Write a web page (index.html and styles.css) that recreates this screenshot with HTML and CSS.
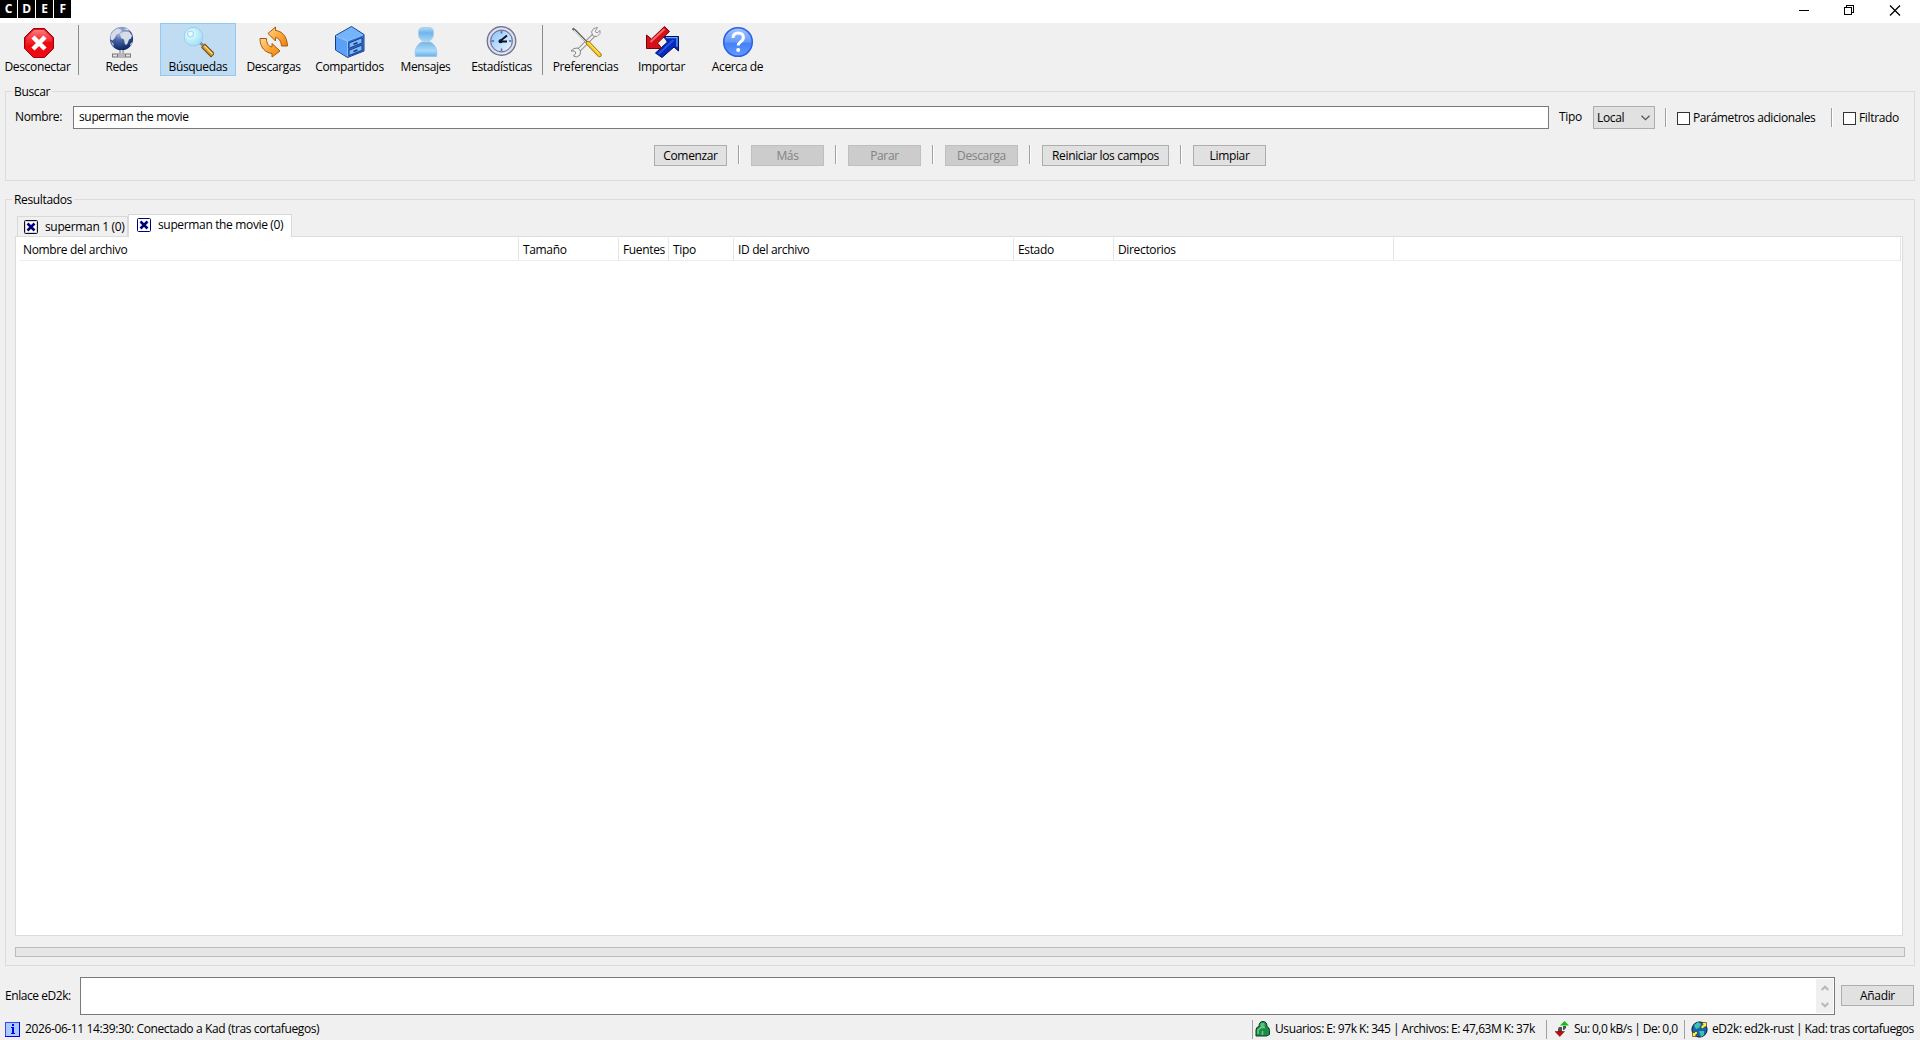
FILE: index.html
```html
<!DOCTYPE html>
<html lang="es">
<head>
    <meta charset="UTF-8">
    <title>Búsquedas</title>
    <link rel="stylesheet" href="styles.css">
</head>
<body>
    <div class="titlebar">
        <div class="keys">
            <span>C</span><span>D</span><span>E</span><span>F</span>
        </div>
        <svg class="window-buttons" width="102" height="11" viewBox="0 0 102 11" fill="none" stroke="#000" shape-rendering="crispEdges">
            <path d="M0 5.5h10"/>
            <path d="M45.500 2.500h7v7h-7zM47.500 2.500v-2h7v7h-2"/>
            <path d="M91 .5l10 10M101 .5l-10 10" stroke-width="1.300" shape-rendering="auto"/>
        </svg>
    </div>

    <div class="toolbar">
        <div class="tool">
            <svg width="32" height="32" viewBox="0 0 32 32">
                <defs>
                    <linearGradient id="red" x1="0" y1="0" x2="0" y2="1">
                        <stop offset="0" stop-color="#ff9a9a"/><stop offset=".6" stop-color="#f4343c"/><stop offset="1" stop-color="#e81018"/>
                    </linearGradient>
                </defs>
                <path d="M11.500 2.500h11l9 9v11l-9 9h-11l-9-9v-11z" fill="#ee0a12" stroke="#9c0008"/>
                <path d="M12 4h10l8 8v3.500q-13 0-26 5v-8.500z" fill="url(#red)" opacity=".8"/>
                <path d="M11 11l12 12M23 11l-12 12" stroke="#fff" stroke-width="4.500"/>
            </svg>
            <span>Desconectar</span>
        </div>
        <div class="tool-sep"></div>
        <div class="tool">
            <svg width="32" height="32" viewBox="0 0 32 32">
                <defs>
                    <radialGradient id="globe" cx=".4" cy=".2" r=".8">
                        <stop offset="0" stop-color="#c4d0ea"/><stop offset=".45" stop-color="#4a68a8"/><stop offset="1" stop-color="#0c2464"/>
                    </radialGradient>
                </defs>
                <circle cx="15.500" cy="12.700" r="11.600" fill="url(#globe)"/>
                <path d="M4.500 9l3-4 4-2.500 4 1.500-2 3-3 1.500-2 4-2 2-2-1zM14 8l4-2.500 5 0 3 4-1 3-2 1-2 5-2 0-1-5-3-1.500zM17 2.500l4 0 3 2-4 0z" fill="#d8dce8"/>
                <path d="M5 15l3 3-1 3zM24 18l2-2v2l-2 2z" fill="#a8b4d0"/>
                <path d="M15.500 24v4M6 29.500h19" stroke="#777" stroke-width="4"/>
                <path d="M15.500 24v4M7 29.500h4M20 29.500h4" stroke="#e4e4e4" stroke-width="2"/>
                <path d="M12 29.500h7" stroke="#b8b8b8" stroke-width="4"/>
            </svg>
            <span>Redes</span>
        </div>
        <div class="tool active">
            <svg width="32" height="32" viewBox="0 0 32 32">
                <defs>
                    <radialGradient id="lens" cx=".35" cy=".35" r=".75">
                        <stop offset="0" stop-color="#fff"/><stop offset=".4" stop-color="#c6f2fc"/><stop offset="1" stop-color="#9adcf6"/>
                    </radialGradient>
                </defs>
                <path d="M17 16l6 5" stroke="#8094a0" stroke-width="3"/>
                <circle cx="11.500" cy="10.700" r="9.300" fill="url(#lens)" stroke="#a4cbe8"/>
                <circle cx="8.500" cy="8" r="3" fill="#e8fcff" stroke="#8cd4f0"/>
                <path d="M21 19.500l10 10" stroke="#70400c" stroke-width="5.500"/>
                <path d="M21.500 20l9 9" stroke="#d89a30" stroke-width="3.500"/>
                <path d="M22.500 19.800l8 8" stroke="#ffe490" stroke-width="1.200"/>
            </svg>
            <span>Búsquedas</span>
        </div>
        <div class="tool">
            <svg width="32" height="32" viewBox="0 0 32 32">
                <defs>
                    <linearGradient id="orange" x1="0" y1="0" x2="1" y2="1">
                        <stop offset="0" stop-color="#ffd890"/><stop offset=".5" stop-color="#ffa83c"/><stop offset="1" stop-color="#f08010"/>
                    </linearGradient>
                </defs>
                <g fill="url(#orange)" stroke="#a85808">
                    <path d="M10 7.500l7.500-6.500v3.500c6 .5 11.500 5 12 15.500h-6c-.5-5-2.500-8-6-8.500v3.500z"/>
                    <path d="M22 25l-8 6v-3.500c-7-1-12-6-12-15h6.500c0 5 2 8 5.500 8.500v-3.500z"/>
                </g>
            </svg>
            <span>Descargas</span>
        </div>
        <div class="tool">
            <svg width="32" height="32" viewBox="0 0 32 32">
                <path d="M1.500 9.500l16-9 12.500 8v16.500l-16.500 6.500-12-7.500z" fill="#3c82e0" stroke="#123c8c"/>
                <path d="M2 9.700l15.500-8.700 12 7.700-16 6.300z" fill="#74b4fa"/>
                <path d="M2 10l11.500 5v16l-11.500-7z" fill="#5ca0f6"/>
                <path d="M13.500 15l16-6.300v16l-16 6.300z" fill="#2c6cd0"/>
                <path d="M15 17l13-5.300v5.300l-13 5.300zM15 24.300l13-5.300v5.300l-13 5.200z" fill="#84b8f4" stroke="#14408c"/>
                <path d="M19.500 18.300l4-1.600M19.500 25.500l4-1.600" stroke="#123c8c" stroke-width="1.600"/>
                <path d="M2 10l11.500 5v15.500M13.500 15l15.500-6" fill="none" stroke="#a8d4ff" stroke-width=".8"/>
            </svg>
            <span>Compartidos</span>
        </div>
        <div class="tool">
            <svg width="32" height="32" viewBox="0 0 32 32">
                <defs>
                    <linearGradient id="head" x1="0" y1="0" x2="0" y2="1">
                        <stop offset="0" stop-color="#b4daf6"/><stop offset=".4" stop-color="#70b4ec"/><stop offset="1" stop-color="#a4d8f8"/>
                    </linearGradient>
                    <linearGradient id="torso" x1="0" y1="0" x2="0" y2="1">
                        <stop offset="0" stop-color="#78b4e4"/><stop offset=".6" stop-color="#a8dcfa"/><stop offset="1" stop-color="#68aee8"/>
                    </linearGradient>
                </defs>
                <path d="M5.500 30.500c-1.500-7 2-13 6.500-14.500h8c4.500 1.500 8 7.500 6.500 14.500z" fill="url(#torso)" stroke="#90c4ea" stroke-width=".8"/>
                <path d="M11.500 1.500h9q3.500 1 3 6 0 6-5 7.500h-5q-5-1.500-5-7.500-.5-5 3-6z" fill="url(#head)" stroke="#a0cce8" stroke-width=".8"/>
            </svg>
            <span>Mensajes</span>
        </div>
        <div class="tool">
            <svg width="32" height="32" viewBox="0 0 32 32">
                <defs>
                    <linearGradient id="dial" x1="0" y1="0" x2="1" y2="1">
                        <stop offset="0" stop-color="#88c0f8"/><stop offset="1" stop-color="#f0faff"/>
                    </linearGradient>
                </defs>
                <circle cx="15.500" cy="15" r="14.300" fill="#b4b8d0" stroke="#6c7090" stroke-width="1.200"/>
                <circle cx="15.500" cy="15" r="12.500" fill="none" stroke="#e4e6f2" stroke-width="1.500"/>
                <circle cx="15.500" cy="15" r="10.800" fill="url(#dial)" stroke="#686c8c"/>
                <path d="M15.500 5v2.500M15.500 22.500v2.500M5.500 15h2.500M23 15h2.500" stroke="#4068b8" stroke-width="1.500"/>
                <path d="M13.500 15.500l7.500-6M13 15.500h8" stroke="#081828" stroke-width="2"/>
                <circle cx="14.500" cy="15.300" r="2" fill="#081828"/>
            </svg>
            <span>Estadísticas</span>
        </div>
        <div class="tool-sep"></div>
        <div class="tool">
            <svg width="32" height="32" viewBox="0 0 32 32">
                <path d="M7 26l18-18" stroke="#888" stroke-width="4"/>
                <path d="M7 26l18-18" stroke="#f0f0f0" stroke-width="2.400"/>
                <path d="M27.500 1.500l-4 1-2 3.500 1.500 4 4 .5 3-3 0-3-3 2.500-2-1.500z" fill="#f4f4f4" stroke="#888" stroke-width=".9"/>
                <path d="M1 25h3.500l1.500 2-2.500 3 3 1 3.500-2 .5-4-2.500-3-4 .5z" fill="#f4f4f4" stroke="#777" stroke-width=".9"/>
                <path d="M2.500 2.500l3 2 11.500 12" fill="none" stroke="#666" stroke-width="2.200"/>
                <path d="M4 4l12 12" stroke="#d8d8d8"/>
                <path d="M18 17l11.500 12" stroke="#9c6c00" stroke-width="4.300" stroke-linecap="round"/>
                <path d="M18 17l11.500 12" stroke="#ffc81c" stroke-width="2.800" stroke-linecap="round"/>
                <path d="M19 17l10 10.500" stroke="#fff09c"/>
            </svg>
            <span>Preferencias</span>
        </div>
        <div class="tool">
            <svg width="33" height="32" viewBox="0 0 33 32">
                <path d="M9.500 27l12-11-5-5.500h16v14.500l-4.500-4-12 10.500z" fill="#0828b8" stroke="#040c60"/>
                <path d="M12.500 28l15-14" stroke="#1c58e8" stroke-width="2"/>
                <path d="M20 11.700h11v9" fill="none" stroke="#5cb0ff" stroke-width="1.300"/>
                <path d="M11.500 16.500l6-5 2.500 3-6 5z" fill="#f0f0f0"/>
                <path d="M18.500.5l5 5-12 11.500 4.500 5.500h-15.500v-13.500l5 4z" fill="#d41018" stroke="#780008"/>
                <path d="M18.500 3l-14 13" stroke="#ff6468" stroke-width="2"/>
            </svg>
            <span>Importar</span>
        </div>
        <div class="tool">
            <svg width="32" height="32" viewBox="0 0 32 32">
                <defs>
                    <linearGradient id="help" x1="0" y1="0" x2="0" y2="1">
                        <stop offset="0" stop-color="#a4c6ff"/><stop offset=".5" stop-color="#6498fa"/><stop offset=".55" stop-color="#4480f8"/><stop offset="1" stop-color="#649cff"/>
                    </linearGradient>
                </defs>
                <circle cx="16" cy="16" r="14.300" fill="url(#help)" stroke="#2860ec" stroke-width="1.500"/>
                <path d="M11 12q0-5 5.200-5t5.200 4.500q0 2.500-2.700 4.300-2.500 1.700-2.500 3.700" fill="none" stroke="#fff" stroke-width="3"/>
                <circle cx="16.200" cy="24" r="2" fill="#fff"/>
            </svg>
            <span>Acerca de</span>
        </div>
    </div>

    <fieldset class="search">
        <legend>Buscar</legend>
        <div class="search-row">
            <label class="name-label">Nombre:</label>
            <div class="name-input">superman the movie</div>
            <label class="type-label">Tipo</label>
            <div class="select">Local
                <svg width="9" height="6" viewBox="0 0 9 6" fill="none" stroke="#555" stroke-width="1.300"><path d="M.5 .7l4 4 4-4"/></svg>
            </div>
            <i class="sep"></i>
            <label class="check params"><i></i>Parámetros adicionales</label>
            <i class="sep"></i>
            <label class="check"><i></i>Filtrado</label>
        </div>
        <div class="search-buttons">
            <div class="btn">Comenzar</div>
            <i class="sep"></i>
            <div class="btn disabled">Más</div>
            <i class="sep"></i>
            <div class="btn disabled">Parar</div>
            <i class="sep"></i>
            <div class="btn disabled">Descarga</div>
            <i class="sep"></i>
            <div class="btn wide">Reiniciar los campos</div>
            <i class="sep"></i>
            <div class="btn">Limpiar</div>
        </div>
    </fieldset>

    <fieldset class="results">
        <legend>Resultados</legend>
        <div class="tabs">
            <div class="tab">
                <svg width="14" height="14" viewBox="0 0 14 14"><rect x=".5" y=".5" width="13" height="13" rx="1" fill="#fff" stroke="#000080"/><rect x="1.500" y="1.500" width="11" height="11" fill="none" stroke="#e8e060"/><path d="M3.500 3.500l7 7M10.500 3.500l-7 7" stroke="#000080" stroke-width="2.600"/></svg>
                <span>superman 1 (0)</span>
            </div>
            <div class="tab current">
                <svg width="14" height="14" viewBox="0 0 14 14"><rect x=".5" y=".5" width="13" height="13" rx="1" fill="#fff" stroke="#000080"/><path d="M3.500 3.500l7 7M10.500 3.500l-7 7" stroke="#000080" stroke-width="2.600"/></svg>
                <span>superman the movie (0)</span>
            </div>
        </div>
        <div class="list">
            <div class="list-header">
                <div>Nombre del archivo</div>
                <div>Tamaño</div>
                <div>Fuentes</div>
                <div>Tipo</div>
                <div>ID del archivo</div>
                <div>Estado</div>
                <div>Directorios</div>
                <div></div>
            </div>
        </div>
        <div class="progress"></div>
    </fieldset>

    <div class="link-row">
        <label>Enlace eD2k:</label>
        <div class="link-input">
            <div class="scroll">
                <svg width="8" height="6" viewBox="0 0 8 6" fill="none" stroke="#b8b8b8" stroke-width="2"><path d="M.7 5l3.300-3.300L7.300 5"/></svg>
                <svg width="8" height="6" viewBox="0 0 8 6" fill="none" stroke="#b8b8b8" stroke-width="2"><path d="M.7 1l3.300 3.300L7.300 1"/></svg>
            </div>
        </div>
        <div class="btn">Añadir</div>
    </div>

    <div class="statusbar">
        <div class="status log">
            <svg width="15" height="15" viewBox="0 0 15 15"><rect x=".5" y=".5" width="14" height="14" fill="#a8ccff" stroke="#4040ff"/><path d="M14.500 0v14.500H0" fill="none" stroke="#0000f0"/><path d="M7 2h2v2h-2zM6 5h3v6h1v1h-4v-1h1v-5h-1z" fill="#0000f0"/></svg>
            <span>2026-06-11 14:39:30: Conectado a Kad (tras cortafuegos)</span>
        </div>
        <i class="status-sep"></i>
        <div class="status users">
            <svg width="15" height="16" viewBox="0 0 15 16"><path d="M1 15V9q0-3 3-3.500 0-5 4-5t4 5q2.500 1 2.500 4v4l-3 1.500z" fill="#1c8c44" stroke="#083c1c"/><circle cx="7.500" cy="4" r="2.300" fill="#58c080"/><path d="M3 13V9l3-2.500h4M7.500 14v-4" fill="none" stroke="#6ccc90" stroke-width="1.500"/></svg>
            <span>Usuarios: E: 97k K: 345 | Archivos: E: 47,63M K: 37k</span>
        </div>
        <i class="status-sep"></i>
        <div class="status speed">
            <svg width="14" height="16" viewBox="0 0 14 16"><path d="M9.500 0l4.500 4.500H5z" fill="#10c010"/><path d="M8 5h3v2l-2 2h-1z" fill="#505050"/><path d="M4 6h3v5H3V8z" fill="#505050"/><path d="M0 10.500h9.500L4.800 15.500z" fill="#c80808" stroke="#600" stroke-width=".5"/></svg>
            <span>Su: 0,0 kB/s | De: 0,0</span>
        </div>
        <i class="status-sep"></i>
        <div class="status network">
            <svg width="17" height="17" viewBox="0 0 17 17"><circle cx="8.500" cy="8.500" r="7.600" fill="#1464b4" stroke="#04182c"/><path d="M3 4l4-3 3 2-2 4-3 1zM8 10l5 0 0 4-3 2z" fill="#40c0b0"/><path d="M11 1.500h4.500v5l-1.500-1-2.500 2.500-2-2 2.500-2.500zM6 15.500H1.500v-5l1.500 1.500 2-2 2 2-2.500 2z" fill="#ffec50" stroke="#302800" stroke-width=".6"/></svg>
            <span>eD2k: ed2k-rust | Kad: tras cortafuegos</span>
        </div>
    </div>
</body>
</html>
```
FILE: styles.css
```css
* {
    box-sizing: border-box;
}
html {
    height: 1040px;
    overflow: hidden;
}
body {
    margin: 0;
    height: 1040px;
    background: #f0f0f0;
    color: #000;
    font: 12px/16px "Open Sans", "Noto Sans", sans-serif;
    letter-spacing: -0.35px;
    white-space: nowrap;
    overflow: hidden;
    display: flex;
    flex-direction: column;
}
body > * {
    flex: none;
}
svg {
    display: block;
    flex: none;
}
i {
    display: block;
}
.titlebar {
    height: 23px;
    background: #fff;
    display: flex;
    justify-content: space-between;
    align-items: flex-start;
    padding-right: 19px;
}
.keys {
    display: flex;
    gap: 1px;
}
.keys span {
    width: 17px;
    height: 18px;
    background: #000;
    color: #fff;
    font-weight: bold;
    font-size: 12px;
    line-height: 18px;
    text-align: center;
}
.window-buttons {
    margin-top: 5px;
}

/* toolbar */
.toolbar {
    height: 61px;
    display: flex;
}
.tool {
    width: 76px;
    height: 53px;
    padding-top: 3px;
    display: flex;
    flex-direction: column;
    align-items: center;
}
.tool span {
    margin: 1px 1px 0 0;
}
.tool.active {
    background: #c0dcf3;
    border: 1px solid #90c8f6;
    padding-top: 2px;
}
.tool.active span {
    margin-right: 0;
}
.tool-sep {
    width: 1px;
    height: 50px;
    margin: 2px 5px 0 2px;
    background: #8c8c8c;
}

/* groups */
fieldset {
    margin: 0 5px;
    padding: 0;
    border: 1px solid #dcdcdc;
    min-width: 0;
}
legend {
    height: 15px;
    line-height: 15px;
    margin-left: 6px;
    padding: 0 2px;
}
.search {
    height: 97px;
}
.search-row {
    display: flex;
    align-items: center;
    height: 23px;
    margin-top: 7px;
    padding-left: 9px;
}
.name-label {
    width: 58px;
    margin-top: -1px;
}
.name-input {
    width: 1476px;
    height: 23px;
    background: #fff;
    border: 1px solid #7a7a7a;
    padding-left: 5px;
    line-height: 20px;
}
.type-label {
    width: 44px;
    padding-left: 10px;
    margin-top: -1px;
}
.select {
    width: 62px;
    height: 23px;
    border: 1px solid #adadad;
    background: #e1e1e1;
    padding: 0 4px 0 3px;
    display: flex;
    align-items: center;
    justify-content: space-between;
}
.sep {
    width: 2px;
    height: 19px;
    background: linear-gradient(90deg, #a0a0a0 50%, #fff 50%);
}
.search-row .sep {
    margin: 0 10px;
}
.check {
    display: flex;
    align-items: center;
    gap: 3px;
    padding-top: 1px;
}
.check i {
    width: 13px;
    height: 13px;
    border: 1px solid #333;
    background: #fff;
}
.params {
    width: 144px;
    letter-spacing: -0.4px;
}
.search-buttons {
    display: flex;
    justify-content: center;
    gap: 11px;
    margin-top: 16px;
}
.btn {
    width: 73px;
    height: 21px;
    border: 1px solid #adadad;
    background: #e1e1e1;
    line-height: 20px;
    text-align: center;
}
.btn.wide {
    width: 127px;
}
.btn.disabled {
    background: #ccc;
    border-color: #bfbfbf;
    color: #838383;
}

/* results */
.results {
    height: 774px;
    margin-top: 11px;
}
.tabs {
    display: flex;
    align-items: flex-end;
    height: 23px;
    margin: 6px 0 0 11px;
}
.tab {
    width: 111px;
    height: 20px;
    border: 1px solid #d9d9d9;
    border-bottom: 0;
    display: flex;
    align-items: center;
    gap: 7px;
    padding-left: 6px;
}
.tab.current {
    position: relative;
    width: 164px;
    height: 23px;
    margin-bottom: -1px;
    padding: 0 0 2px 8px;
    background: #fff;
}
.list {
    width: 1888px;
    height: 700px;
    margin-left: 9px;
    border: 1px solid #dcdcdc;
    background: #fff;
    padding: 1px 1px 0 3px;
}
.list-header {
    display: grid;
    grid-template-columns: 500px 100px 50px 65px 280px 100px 280px 1fr;
    height: 23px;
    border-bottom: 1px solid #ededed;
    line-height: 23px;
}
.list-header div {
    padding-left: 4px;
    border-right: 1px solid #e5e5e5;
}
.progress {
    width: 1890px;
    height: 10px;
    margin: 11px 0 0 9px;
    border: 1px solid #bcbcbc;
    background: #e6e6e6;
}

/* ed2k link */
.link-row {
    display: flex;
    align-items: center;
    height: 38px;
    margin-top: 11px;
    padding-left: 5px;
}
.link-row label {
    width: 75px;
    margin-top: -1px;
    letter-spacing: -0.45px;
}
.link-row .btn {
    margin-top: -1px;
}
.link-input {
    width: 1755px;
    height: 38px;
    margin-right: 6px;
    border: 1px solid #7a7a7a;
    background: #fff;
    padding: 1px;
    display: flex;
    justify-content: flex-end;
}
.scroll {
    width: 17px;
    background: #f0f0f0;
    display: flex;
    flex-direction: column;
    align-items: center;
    justify-content: space-between;
    padding: 6px 0 5px;
}

/* status bar */
.statusbar {
    display: flex;
    align-items: center;
    height: 25px;
    padding: 3px 0 0 5px;
}
.status {
    display: flex;
    align-items: center;
    gap: 5px;
}
.status-sep {
    width: 1px;
    height: 19px;
    background: #a0a0a0;
}
.log {
    width: 1247px;
    letter-spacing: -0.38px;
}
.users {
    width: 293px;
    padding-left: 2px;
    gap: 5px;
    letter-spacing: -0.4px;
    word-spacing: -0.3px;
}
.speed {
    width: 137px;
    padding-left: 8px;
    gap: 5px;
    letter-spacing: -0.5px;
    word-spacing: -0.2px;
}
.network {
    padding-left: 6px;
    gap: 4px;
    letter-spacing: -0.42px;
    word-spacing: -0.3px;
}
```
